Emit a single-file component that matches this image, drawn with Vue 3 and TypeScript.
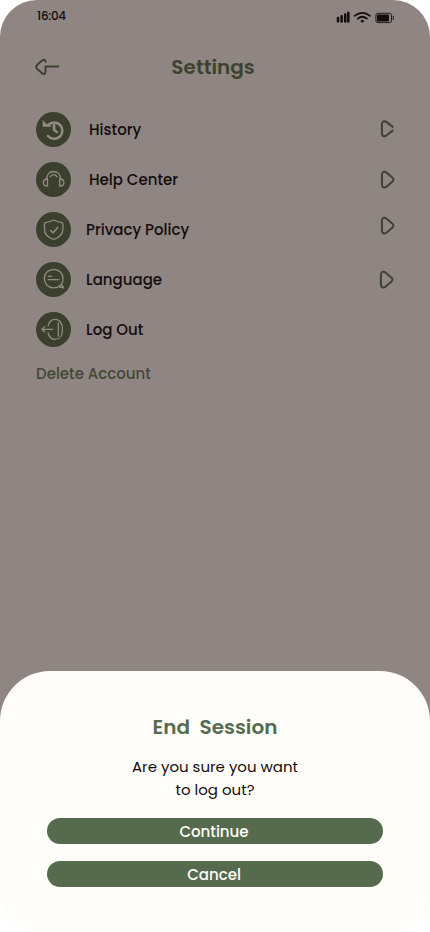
<script setup lang="ts">
interface SettingsItem {
  id: string
  label: string
  caret: boolean
}

const items: SettingsItem[] = [
  { id: 'history', label: 'History', caret: true },
  { id: 'help', label: 'Help Center', caret: true },
  { id: 'privacy', label: 'Privacy Policy', caret: true },
  { id: 'language', label: 'Language', caret: true },
  { id: 'logout', label: 'Log Out', caret: false },
]
</script>

<template>
  <div class="phone">
    <div class="status">
      <span class="time">16:04</span>
      <svg class="indicators" width="58" height="14" viewBox="0 0 58 14" fill="none">
        <path d="M2 8v3.4M5.6 6.3v5.1M9.2 4.5v6.9M12.3 2.8v8.6" stroke="#140c0b" stroke-width="2.5" stroke-linecap="round" />
        <path d="M18.6 5.8q7.7-6 15.4 0M21.7 8.6q4.6-3.7 9.2 0" stroke="#140c0b" stroke-width="1.7" stroke-linecap="round" />
        <circle cx="26.3" cy="11.2" r="1.4" fill="#140c0b" />
        <rect x="39.9" y="3.3" width="15.6" height="9.3" rx="2" stroke="#140c0b" stroke-width=".9" />
        <rect x="41" y="4.5" width="12" height="7" rx=".8" fill="#140c0b" />
        <path d="M56.9 5.8q1.4 2.1 0 4.2" stroke="#140c0b" stroke-width=".9" />
      </svg>
    </div>

    <header class="header">
      <svg class="back" width="25" height="18" viewBox="0 0 25 18" fill="none" stroke="#3d412f" stroke-width="2" stroke-linecap="round" stroke-linejoin="round">
        <path d="M23.3 8.5H10.5v4.9c0 2.5-1.7 3.1-3.5 1.8L2.3 11.1C.8 9.7.8 8.1 2.3 6.7L7 2.6c1.8-1.4 3.5-.8 3.5 1.1" />
      </svg>
      <h1 class="title">Settings</h1>
    </header>

    <ul class="menu">
      <li v-for="item in items" :key="item.id" class="row" :class="item.id">
        <svg class="badge" width="35" height="35" viewBox="0 0 35 35" fill="none" stroke="#928b83" stroke-width="1.3" stroke-linecap="round" stroke-linejoin="round">
          <circle cx="17.5" cy="17.5" r="17.5" fill="#3b402e" stroke="none" />
          <g v-if="item.id === 'history'">
            <path d="M12.6 12.6A8.2 8.2 0 1 1 12 24" stroke-width="2.5" />
            <path d="M7 8.8v5.7h8.2l-2.8-2.3-1.8.2Z" fill="#928b83" stroke="#928b83" stroke-width=".6" />
            <path d="M18 12.8v5l2.8 2.2" stroke-width="2.6" />
          </g>
          <g v-else-if="item.id === 'help'">
            <path d="M10.8 17c0-4.6 2.8-7.5 6.8-7.5s6.8 2.9 6.8 7.5M14 14.8c1.8-3 5.4-3 7.2 0" />
            <path d="M11.5 17v7.2c-2.8 0-4.2-1.2-4.2-3.6s1.4-3.6 4.2-3.6ZM23.7 17v7.2c2.8 0 4.2-1.2 4.2-3.6S26.5 17 23.7 17Z" />
          </g>
          <g v-else-if="item.id === 'privacy'">
            <path d="M17.7 8c-2.5 1.5-5.7 2.2-8.2 2.6q-1 .3-1 1.5v5c0 5.6 3.8 8.7 9.2 10.4 5.4-1.7 9.2-4.8 9.2-10.4v-5q0-1.2-1-1.5c-2.5-.4-5.7-1.1-8.2-2.6Z" />
            <path d="m14.6 18.5 2.5 2.2 4.5-5.2" stroke-width="1.5" />
          </g>
          <g v-else-if="item.id === 'language'">
            <path d="M24.3 23.2c-1.7 1.8-3.9 2.7-6.6 2.7-5.4 0-9.4-4-9.4-9.3s4-9.1 9.5-9.1 9.2 3.8 9.2 9.2c0 2.4-.8 4.3-1.7 5.5l2.2 3.7-3.9-.9Z" />
            <path d="M12.3 14.4h3.2M12.3 17.6H23" stroke-width="1.4" />
          </g>
          <g v-else>
            <path d="M12.1 13.8c.9-3.9 3.6-6.5 7.1-6.5 4.4 0 7.3 4 7.3 10.1s-2.9 10-7.3 10c-3.5 0-6.2-2.6-7.1-6.4M22.4 10.8v13.4M16.5 17.3H6M8.8 14.6 6 17.3l2.8 2.7" />
          </g>
        </svg>
        <span class="label">{{ item.label }}</span>
        <svg v-if="item.caret" class="caret" width="14" height="18" viewBox="0 0 14 18" fill="none" stroke="#3d412f" stroke-width="2" stroke-linecap="round" stroke-linejoin="round">
          <path v-if="item.id === 'history'" d="M12.7 6.9 6.7 2.1C4.3.2 1.9 1.3 1.9 4.2v9c0 2.9 2.4 4 4.8 2.1l5.9-4.7" />
          <path v-else d="M1.9 3.8C1.9.9 4.3-.2 6.7 1.7l5.6 4.7q2.3 2.2 0 4.4L6.7 15.5c-2.4 1.9-4.8.8-4.8-2.1Z" />
        </svg>
      </li>
    </ul>
    <a class="delete">Delete Account</a>

    <section class="sheet">
      <h2 class="sheet-title">End&nbsp; Session</h2>
      <p class="question">Are you sure you want<br />to log out?</p>
      <button class="action">Continue</button>
      <button class="action">Cancel</button>
    </section>
  </div>
</template>

<style>
body {
  background: #fff;
}
</style>

<style scoped>
.phone {
  display: flex;
  flex-direction: column;
  width: 430px;
  height: 932px;
  box-sizing: border-box;
  overflow: hidden;
  border-radius: 37px;
  background: linear-gradient(#8f8683 0 800px, #fff 800px);
  font-family: Poppins, Inter, "Open Sans", sans-serif;
  color: #140c0b;
}
.status {
  display: flex;
  justify-content: space-between;
  height: 32px;
  padding: 10px 36px 0 37px;
  box-sizing: border-box;
}
.time {
  margin-top: -1px;
  font-size: 12px;
  font-weight: 500;
  line-height: 13px;
  letter-spacing: -0.3px;
}
.header {
  display: grid;
  grid-template-columns: 25px 1fr 25px;
  align-items: center;
  height: 70px;
  padding: 0 36px 0 35px;
}
.title {
  margin: 0;
  padding-right: 3px;
  text-align: center;
  font-size: 20px;
  font-weight: 600;
  line-height: 30px;
  color: #3d412f;
}
.menu {
  display: flex;
  flex-direction: column;
  gap: 15px;
  margin: 10px 0 0;
  padding: 0 36px;
  list-style: none;
}
.row {
  display: flex;
  align-items: center;
  height: 35px;
}
.badge {
  flex: none;
}
.label {
  flex: 1;
  margin-left: 15px;
  font-size: 15px;
  font-weight: 500;
  line-height: 22px;
}
.history .label,
.help .label {
  margin-left: 18px;
}
.caret {
  overflow: visible;
}
.history .caret {
  margin-bottom: 2px;
}
.privacy .caret {
  margin-bottom: 8px;
}
.language .caret {
  margin-right: 1px;
}
.delete {
  margin: 16px 0 0 36px;
  font-size: 15px;
  font-weight: 500;
  line-height: 22px;
  color: #424735;
}
.sheet {
  display: flex;
  flex-direction: column;
  align-items: center;
  height: 261px;
  margin-top: auto;
  padding-top: 41px;
  box-sizing: border-box;
  border-radius: 50px 50px 37px 37px;
  background: #fffdf9;
}
.sheet-title {
  margin: 0;
  font-size: 20px;
  font-weight: 600;
  line-height: 30px;
  color: #566b4e;
}
.question {
  margin: 13px 0 17px;
  text-align: center;
  font-size: 15px;
  line-height: 23px;
}
.action {
  width: 336px;
  height: 26px;
  padding: 1px 2px 0 0;
  border: 0;
  border-radius: 13px;
  background: #566b4e;
  font: inherit;
  font-size: 15px;
  font-weight: 500;
  line-height: 25px;
  color: #fffdf9;
}
.action + .action {
  margin-top: 17px;
}
</style>
